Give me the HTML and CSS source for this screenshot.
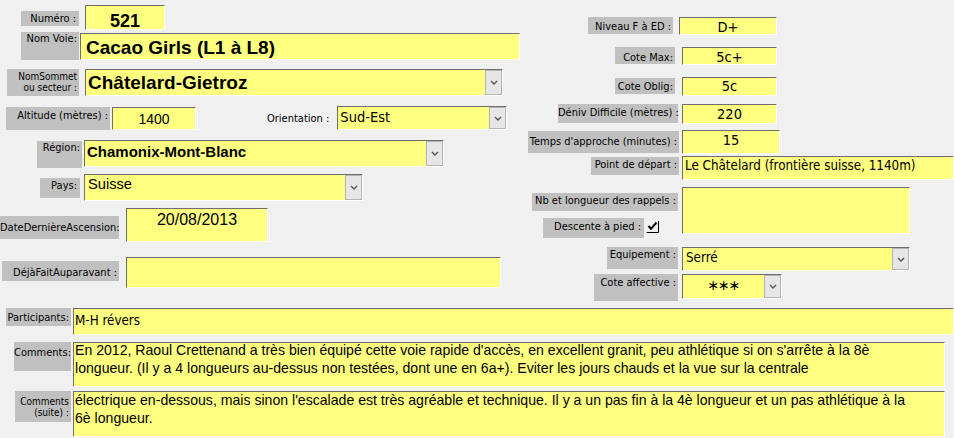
FILE: index.html
```html
<!DOCTYPE html>
<html lang="fr">
<head>
  <meta charset="UTF-8" />
  <title>Fiche voie</title>
  <link rel="stylesheet" href="styles.css">
</head>
<body>

<div class="form">
  <div class="top">

    <div class="col-left">
      <div class="row r-num">
        <div class="lbl l-num">Numéro :</div>
        <div class="fld f-num"><span class="val num">521</span></div>
      </div>

      <div class="row r-voie">
        <div class="lbl l-voie">Nom Voie:</div>
        <div class="fld f-voie"><span class="val big">Cacao Girls (L1 à L8)</span></div>
      </div>

      <div class="row r-som">
        <div class="lbl sm l-som">NomSommet<br>ou secteur :</div>
        <div class="fld f-som">
          <span class="val big">Châtelard-Gietroz</span>
          <span class="dd"><svg width="8" height="5" viewBox="0 0 8 5"><path d="M1 1 L4 4 L7 1" fill="none" stroke="#555" stroke-width="1.4"/></svg></span>
        </div>
      </div>

      <div class="row r-alt">
        <div class="lbl l-alt">Altitude (mètres) :</div>
        <div class="fld f-alt"><span class="val mid">1400</span></div>
        <div class="txt l-ori">Orientation :</div>
        <div class="fld f-ori">
          <span class="val tah">Sud-Est</span>
          <span class="dd"><svg width="8" height="5" viewBox="0 0 8 5"><path d="M1 1 L4 4 L7 1" fill="none" stroke="#555" stroke-width="1.4"/></svg></span>
        </div>
      </div>

      <div class="row r-reg">
        <div class="lbl l-reg">Région:</div>
        <div class="fld f-reg">
          <span class="val reg">Chamonix-Mont-Blanc</span>
          <span class="dd"><svg width="8" height="5" viewBox="0 0 8 5"><path d="M1 1 L4 4 L7 1" fill="none" stroke="#555" stroke-width="1.4"/></svg></span>
        </div>
      </div>

      <div class="row r-pays">
        <div class="lbl l-pays">Pays:</div>
        <div class="fld f-pays">
          <span class="val pays">Suisse</span>
          <span class="dd"><svg width="8" height="5" viewBox="0 0 8 5"><path d="M1 1 L4 4 L7 1" fill="none" stroke="#555" stroke-width="1.4"/></svg></span>
        </div>
      </div>

      <div class="row r-date">
        <div class="lbl l-date">DateDernièreAscension:</div>
        <div class="fld f-date"><span class="val date">20/08/2013</span></div>
      </div>

      <div class="row r-deja">
        <div class="lbl l-deja">DéjàFaitAuparavant :</div>
        <div class="fld f-deja"></div>
      </div>
    </div>

    <div class="col-right">
      <div class="row r1">
        <div class="lbl l-niv">Niveau F à ED :</div>
        <div class="fld f-niv"><span class="val cote">D+</span></div>
      </div>
      <div class="row r2">
        <div class="lbl l-cmax">Cote Max:</div>
        <div class="fld f-cmax"><span class="val cote">5c+</span></div>
      </div>
      <div class="row r3">
        <div class="lbl l-cobl">Cote Oblig:</div>
        <div class="fld f-cobl"><span class="val cote">5c</span></div>
      </div>
      <div class="row r4">
        <div class="lbl l-dniv">Déniv Difficile (mètres) :</div>
        <div class="fld f-dniv"><span class="val cote">220</span></div>
      </div>
      <div class="row r5">
        <div class="lbl l-temps">Temps d'approche (minutes) :</div>
        <div class="fld f-temps"><span class="val cote">15</span></div>
      </div>
      <div class="row r6">
        <div class="lbl l-pt">Point de départ :</div>
        <div class="fld f-pt"><span class="val small">Le Châtelard (frontière suisse, 1140m)</span></div>
      </div>
      <div class="row r7">
        <div class="rap-lbls">
          <div class="lbl l-rap">Nb et longueur des rappels :</div>
          <div class="desc-row">
            <div class="lbl l-desc">Descente à pied :</div>
            <svg class="chk" width="13" height="13" viewBox="0 0 13 13">
              <path d="M0.5 12.5 H12.5 V1" fill="none" stroke="#000" stroke-width="1"/>
              <path d="M2.5 6 L5 8.8 L10.5 2.5" fill="none" stroke="#000" stroke-width="2"/>
            </svg>
          </div>
        </div>
        <div class="fld f-rap"></div>
      </div>
      <div class="row r8">
        <div class="lbl l-equ">Equipement :</div>
        <div class="fld f-equ">
          <span class="val small">Serré</span>
          <span class="dd"><svg width="8" height="5" viewBox="0 0 8 5"><path d="M1 1 L4 4 L7 1" fill="none" stroke="#555" stroke-width="1.4"/></svg></span>
        </div>
      </div>
      <div class="row r9">
        <div class="lbl l-caff">Cote affective :</div>
        <div class="fld f-caff">
          <span class="val stars">∗∗∗</span>
          <span class="dd"><svg width="8" height="5" viewBox="0 0 8 5"><path d="M1 1 L4 4 L7 1" fill="none" stroke="#555" stroke-width="1.4"/></svg></span>
        </div>
      </div>
    </div>

  </div>

  <div class="row b1">
    <div class="lbl l-part">Participants:</div>
    <div class="fld f-part"><span class="val small">M-H révers</span></div>
  </div>
  <div class="row b2">
    <div class="lbl l-com">Comments:</div>
    <div class="fld f-com"><div class="memo">En 2012, Raoul Crettenand a très bien équipé cette voie rapide d'accès, en excellent granit, peu athlétique si on s'arrête à la 8è<br>longueur. (Il y a 4 longueurs au-dessus non testées, dont une en 6a+). Eviter les jours chauds et la vue sur la centrale</div></div>
  </div>
  <div class="row b3">
    <div class="lbl sm l-com2">Comments<br>(suite) :</div>
    <div class="fld f-com2"><div class="memo">électrique en-dessous, mais sinon l'escalade est très agréable et technique. Il y a un pas fin à la 4è longueur et un pas athlétique à la<br>6è longueur.</div></div>
  </div>
</div>

</body>
</html>
```

FILE: styles.css
```css
body { margin: 0; background: #f0f0f0; color: #000; font-family: "Liberation Sans", Arial, sans-serif; }
.form { width: 954px; height: 438px; overflow: hidden; }
.top { display: flex; align-items: flex-start; }
.col-left { width: 525px; flex: none; }
.col-right { flex: 1; }
.row { display: flex; align-items: flex-start; }

/* grey Access labels */
.lbl, .txt {
  box-sizing: border-box; flex: none;
  font-family: "DejaVu Sans Condensed", "DejaVu Sans", sans-serif; font-size: 11px; line-height: 13px;
  text-align: right; padding-right: 2px; white-space: nowrap;
}
.lbl { background: #c0c0c0; }
.lbl.sm { font-size: 10px; line-height: 11px; }

/* yellow sunken fields */
.fld {
  box-sizing: border-box; flex: none; display: flex; overflow: hidden;
  background: #ffff80; border: 1px solid; border-color: #6e6e6e #fff #fff #6e6e6e;
}
.val { flex: 1; white-space: nowrap; overflow: hidden; }
.dd {
  flex: none; width: 17px; box-sizing: border-box; display: flex; align-items: center; justify-content: center;
  background: #e6e6e6; border: 1px solid #b4b4b4;
}
.num { font-weight: bold; font-size: 18px; line-height: 14px; text-align: center; padding-top: 8px; overflow: visible; }
.big { font-weight: bold; font-size: 19px; padding-left: 5px; }
.mid { font-size: 14px; text-align: center; padding-top: 3px; }
.tah { font-family: "DejaVu Sans Condensed", "DejaVu Sans", sans-serif; font-size: 14.5px; padding: 2px 0 0 2px; }
.reg { font-weight: bold; font-size: 15px; padding: 2px 0 0 2px; }
.pays { font-size: 14.67px; padding: 1px 0 0 3px; }
.date { font-size: 16px; text-align: center; padding-top: 2px; }
.cote { font-family: "DejaVu Sans Condensed", "DejaVu Sans", sans-serif; font-size: 14.5px; line-height: 16px; text-align: center; padding-top: 1px; }
.small { font-family: "DejaVu Sans Condensed", "DejaVu Sans", sans-serif; font-size: 13.3px; padding: 1px 0 0 2px; }
.stars { font-family: "DejaVu Sans", sans-serif; font-size: 14px; text-align: center; padding-top: 2px; letter-spacing: -1px; }
.memo { font-size: 14.1px; line-height: 18px; padding-left: 1px; margin-top: -2px; white-space: nowrap; }

/* left column */
.r-num { margin-top: 5px; }
.l-num { margin: 6px 0 0 21px; width: 58px; height: 15px; padding-top: 1px; padding-right: 3px; }
.f-num { margin-left: 6px; width: 80px; height: 25px; }
.r-voie { margin-top: 2px; }
.l-voie { margin-left: 21px; width: 58px; height: 28px; }
.f-voie { margin: 1px 0 0 1px; width: 440px; height: 27px; }
.f-voie .big { padding-top: 3px; }
.r-som { margin-top: 9px; }
.l-som { margin-left: 7px; width: 72px; height: 27px; padding-top: 2px; }
.f-som { margin-left: 6px; width: 418px; height: 27px; }
.f-som .big { padding: 2px 0 0 2px; }
.r-alt { margin-top: 10px; }
.l-alt { margin: 1px 0 0 6px; width: 104px; height: 23px; padding-top: 2px; }
.f-alt { margin: 1px 0 0 2px; width: 84px; height: 23px; }
.l-ori { margin: 6px 0 0 71px; }
.f-ori { margin-left: 6px; width: 170px; height: 24px; }
.r-reg { margin-top: 10px; }
.l-reg { margin: 1px 0 0 37px; width: 45px; height: 27px; }
.f-reg { margin-left: 2px; width: 360px; height: 27px; }
.r-pays { margin-top: 6px; }
.l-pays { margin: 4px 0 0 40px; width: 40px; height: 20px; padding-top: 1px; padding-right: 3px; }
.f-pays { margin-left: 4px; width: 279px; height: 27px; }
.r-date { margin-top: 7px; }
.l-date { margin-top: 8px; width: 119px; height: 23px; padding-top: 5px; }
.f-date { margin-left: 7px; width: 142px; height: 34px; }
.r-deja { margin-top: 15px; }
.l-deja { margin: 4px 0 0 2px; width: 117px; height: 20px; padding-top: 5px; }
.f-deja { margin-left: 7px; width: 375px; height: 31px; }

/* right column */
.r1 { margin-top: 17px; }
.l-niv { margin-left: 63px; width: 85px; height: 17px; padding-top: 3px; }
.f-niv { margin-left: 6px; width: 98px; height: 18px; }
.r2 { margin-top: 12px; }
.l-cmax { margin-left: 90px; width: 60px; height: 17px; padding-top: 4px; }
.f-cmax { margin-left: 7px; width: 95px; height: 18px; }
.r3 { margin-top: 12px; }
.l-cobl { margin: 1px 0 0 90px; width: 60px; height: 16px; padding-top: 2px; }
.f-cobl { margin-left: 7px; width: 95px; height: 19px; }
.f-cobl .cote { padding-top: 0; }
.r4 { margin-top: 8px; }
.l-dniv { margin-left: 33px; width: 120px; height: 19px; padding-top: 2px; }
.f-dniv { margin-left: 4px; width: 95px; height: 20px; }
.r5 { margin-top: 6px; }
.l-temps { margin: 1px 0 0 3px; width: 151px; height: 22px; padding-top: 4px; }
.f-temps { margin-left: 3px; width: 98px; height: 24px; }
.r6 { margin-top: 2px; }
.l-pt { margin: 1px 0 0 66px; width: 88px; height: 18px; padding-top: 1px; }
.f-pt { margin-left: 3px; width: 272px; height: 24px; }
.r7 { margin-top: 7px; }
.rap-lbls { width: 153px; flex: none; }
.l-rap { margin: 6px 0 0 7px; width: 146px; height: 18px; padding-top: 1px; }
.desc-row { display: flex; margin-top: 7px; }
.l-desc { margin-left: 18px; width: 101px; height: 20px; padding-top: 2px; padding-right: 3px; }
.chk { margin: 2px 0 0 2px; flex: none; }
.f-rap { margin-left: 4px; width: 228px; height: 47px; }
.r8 { margin-top: 9px; }
.l-equ { margin-left: 82px; width: 71px; height: 22px; padding-top: 1px; }
.f-equ { margin-left: 4px; width: 228px; height: 24px; }
.f-equ .small { padding-top: 2px; padding-left: 3px; }
.r9 { margin-top: 3px; }
.l-caff { margin-left: 69px; width: 84px; height: 27px; padding-top: 2px; }
.f-caff { margin-left: 4px; width: 100px; height: 25px; }

/* bottom memo rows */
.b1 { margin-top: 7px; }
.l-part { margin-left: 6px; width: 65px; height: 18px; padding-top: 3px; }
.f-part { margin-left: 2px; width: 881px; height: 27px; }
.f-part .small { padding-top: 4px; padding-left: 1px; }
.b2 { margin-top: 7px; }
.l-com { margin-left: 14px; width: 57px; height: 29px; padding-top: 4px; }
.f-com { margin-left: 2px; width: 872px; height: 45px; }
.b3 { margin-top: 4px; }
.l-com2 { margin-left: 15px; width: 56px; height: 31px; padding-top: 5px; }
.f-com2 { margin-left: 2px; width: 872px; height: 46px; }
.f-com2 .memo { margin-top: -1px; }
```
